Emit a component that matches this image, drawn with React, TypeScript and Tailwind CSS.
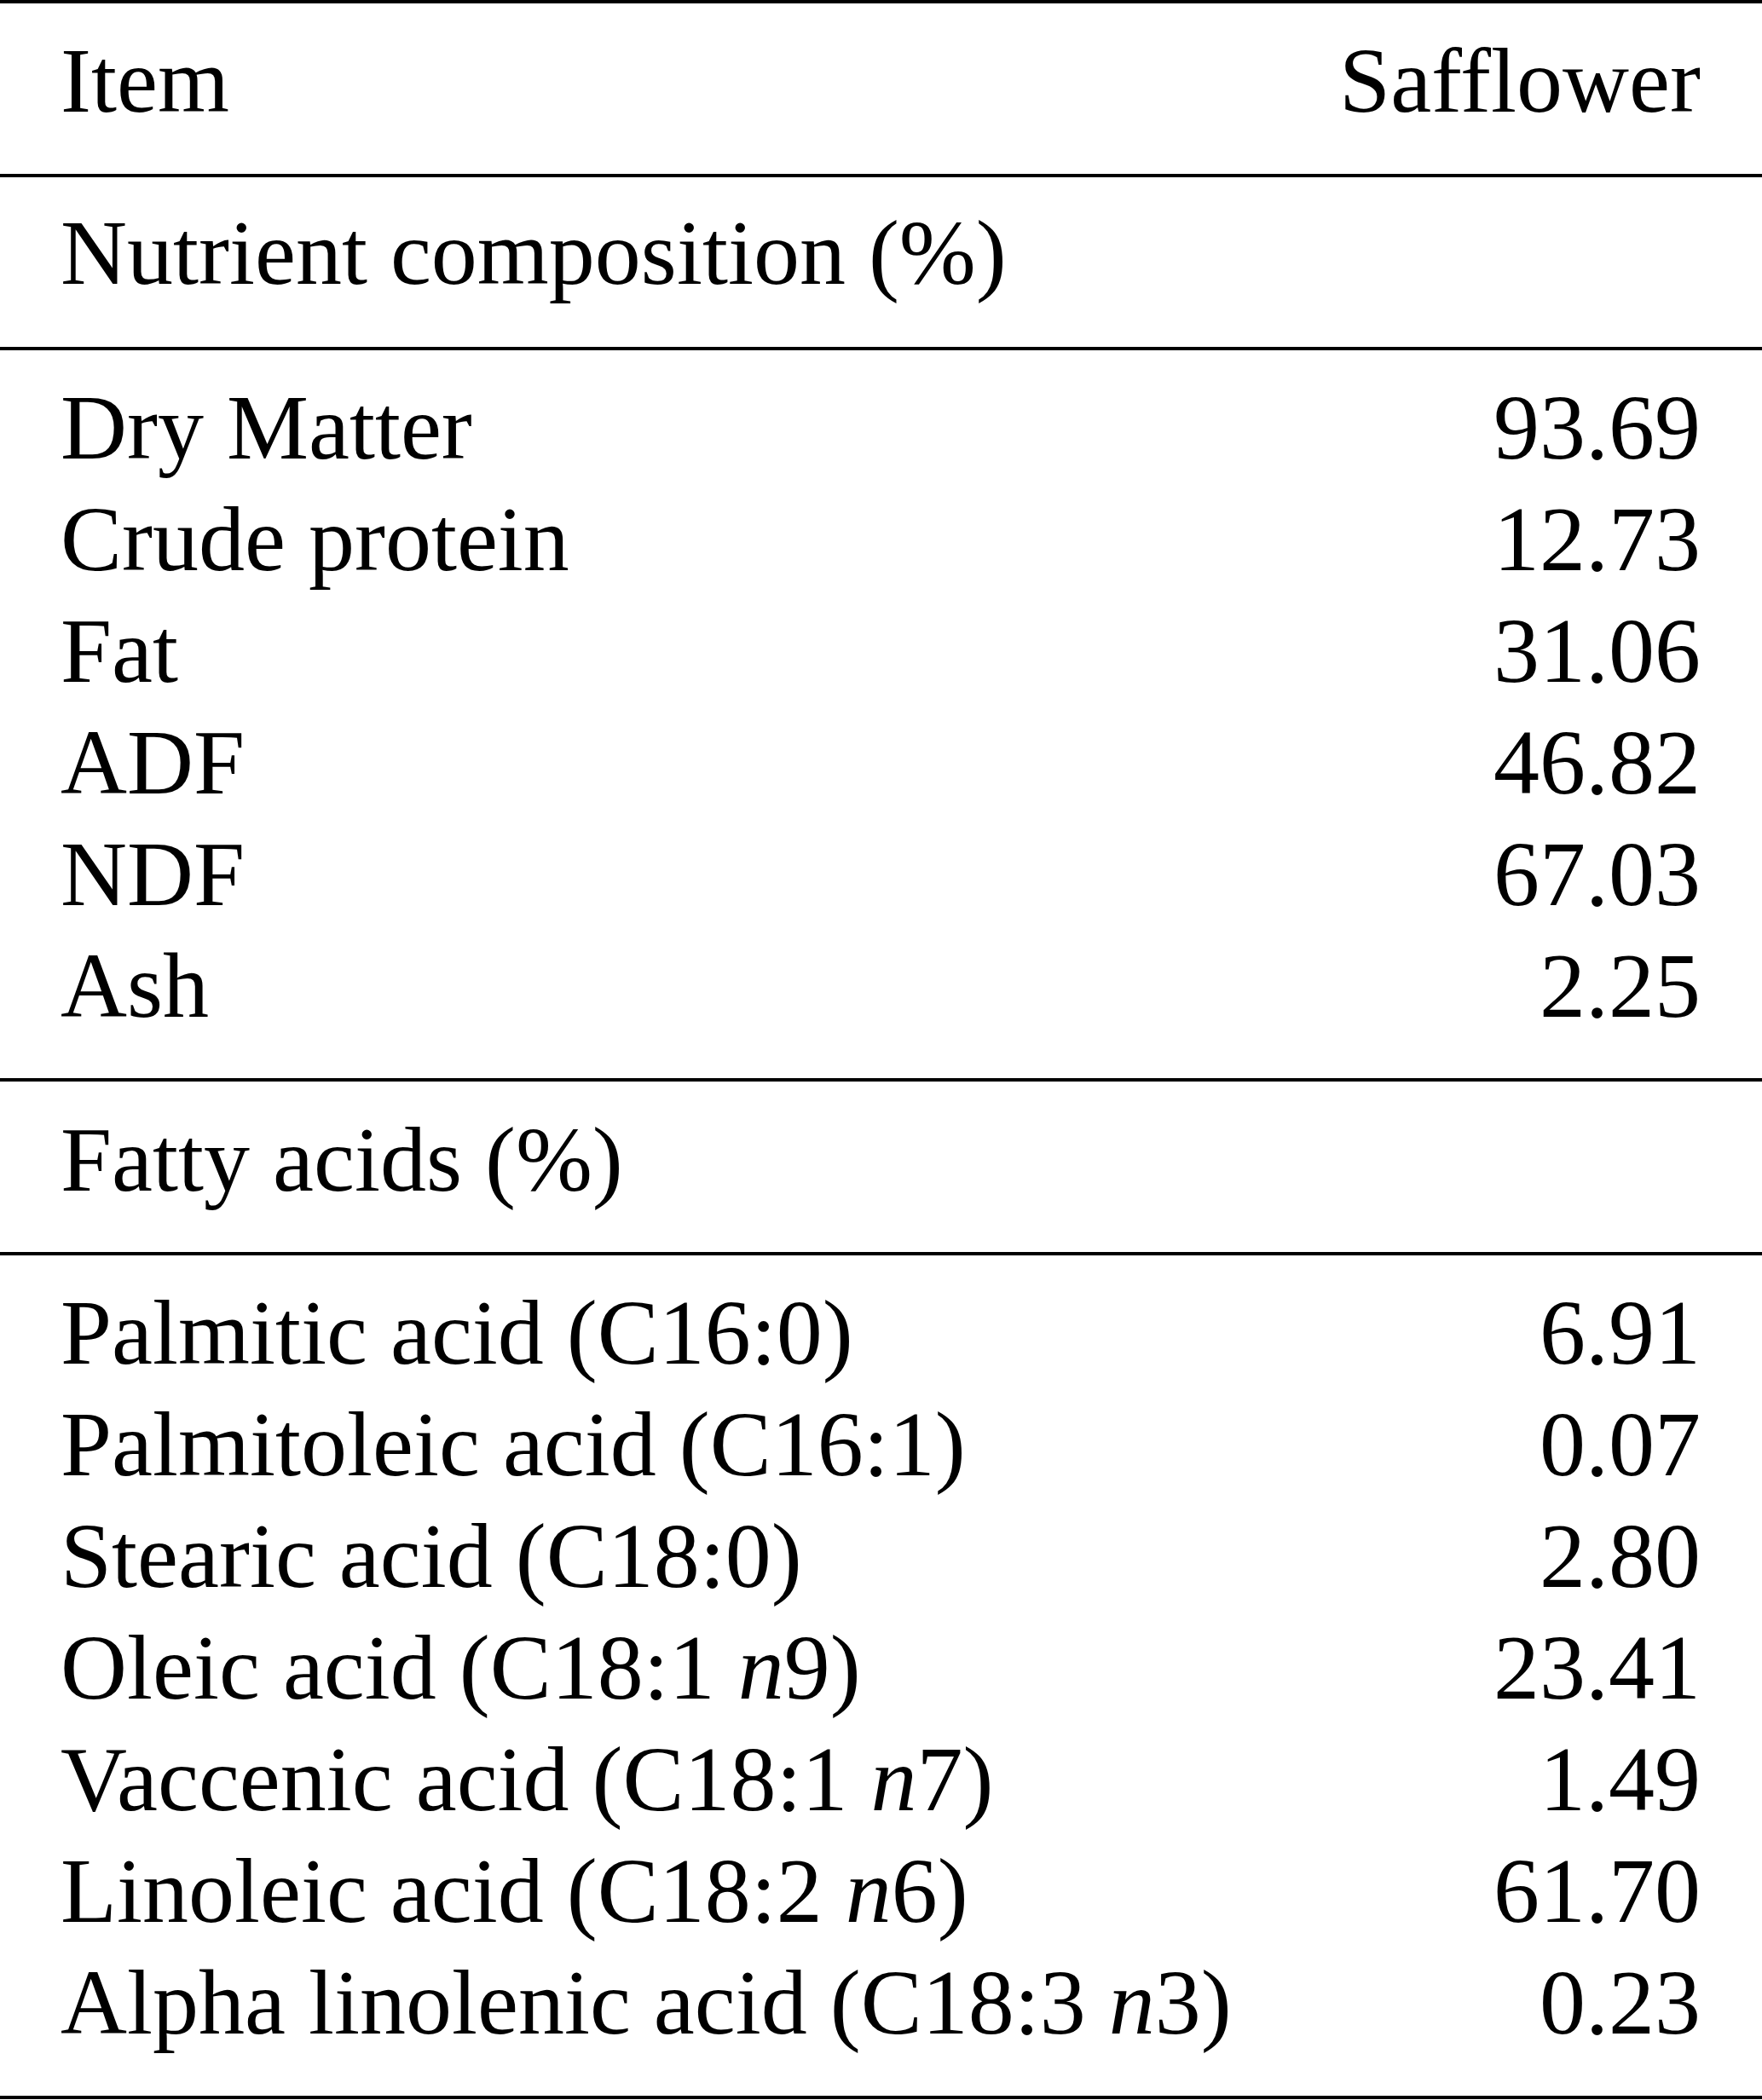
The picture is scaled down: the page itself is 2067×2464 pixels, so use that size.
const nutrients: [string, string][] = [
  ['Dry Matter', '93.69'],
  ['Crude protein', '12.73'],
  ['Fat', '31.06'],
  ['ADF', '46.82'],
  ['NDF', '67.03'],
  ['Ash', '2.25'],
];

const fattyAcids: [React.ReactNode, string][] = [
  ['Palmitic acid (C16:0)', '6.91'],
  ['Palmitoleic acid (C16:1)', '0.07'],
  ['Stearic acid (C18:0)', '2.80'],
  [<>Oleic acid (C18:1 <i>n</i>9)</>, '23.41'],
  [<>Vaccenic acid (C18:1 <i>n</i>7)</>, '1.49'],
  [<>Linoleic acid (C18:2 <i>n</i>6)</>, '61.70'],
  [<>Alpha linolenic acid (C18:3 <i>n</i>3)</>, '0.23'],
];

function Row({ label, value }: { label: React.ReactNode; value?: string }) {
  return (
    <div className="flex justify-between whitespace-nowrap">
      <span>{label}</span>
      {value && <span>{value}</span>}
    </div>
  );
}

export default function App() {
  return (
    <div className="w-[2067px] h-[2464px] bg-white text-black font-['Liberation_Serif','Times_New_Roman',serif] text-[108px] leading-[131px]">
      <div className="h-[4px] bg-black" />

      {/* Header */}
      <div className="pl-[71px] pr-[72px] pt-[25px] pb-[44px]">
        <Row label="Item" value="Safflower" />
      </div>
      <div className="h-[4px] bg-black" />

      {/* Nutrient section */}
      <div className="pl-[71px] pr-[72px] pt-[23px] pb-[45px]">
        <Row label="Nutrient composition (%)" />
      </div>
      <div className="h-[4px] bg-black" />
      <div className="pl-[71px] pr-[72px] pt-[25px] pb-[43px]">
        {nutrients.map(([label, value]) => (
          <Row key={label} label={label} value={value} />
        ))}
      </div>
      <div className="h-[4px] bg-black" />

      {/* Fatty acids section */}
      <div className="pl-[71px] pr-[72px] pt-[26px] pb-[43px]">
        <Row label="Fatty acids (%)" />
      </div>
      <div className="h-[4px] bg-black" />
      <div className="pl-[71px] pr-[72px] pt-[25px] pb-[44px]">
        {fattyAcids.map(([label, value]) => (
          <Row key={value} label={label} value={value} />
        ))}
      </div>
      <div className="h-[4px] bg-black" />
    </div>
  );
}
